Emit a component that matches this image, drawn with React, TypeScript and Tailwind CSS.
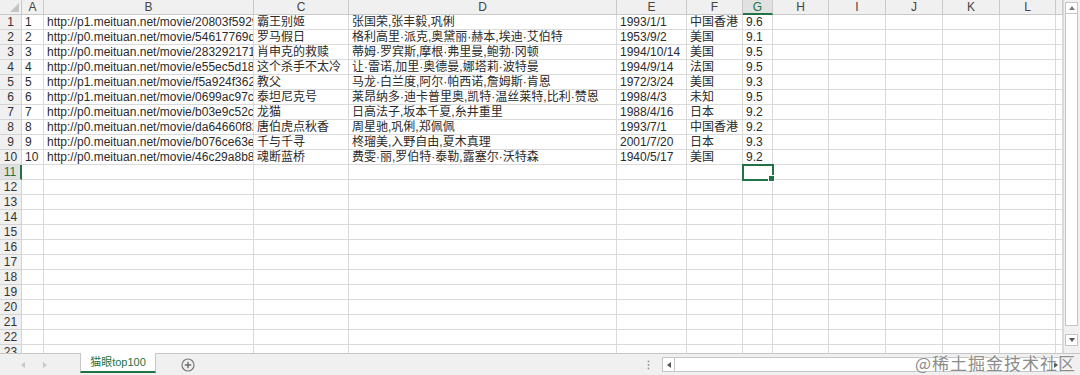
import React from 'react';

const font = { fontFamily: '"Liberation Sans", "Noto Sans CJK SC", sans-serif' };

const columns = [
  { key: 'A', w: 'w-[22px]' },
  { key: 'B', w: 'w-[210px]' },
  { key: 'C', w: 'w-[95px]' },
  { key: 'D', w: 'w-[268px]' },
  { key: 'E', w: 'w-[70px]' },
  { key: 'F', w: 'w-[56px]' },
  { key: 'G', w: 'w-[30px]' },
  { key: 'H', w: 'w-[56px]' },
  { key: 'I', w: 'w-[57px]' },
  { key: 'J', w: 'w-[57px]' },
  { key: 'K', w: 'w-[57px]' },
  { key: 'L', w: 'w-[56px]' },
  { key: 'M', w: 'flex-1 min-w-0' },
];

const movies = [
  ['1', 'http://p1.meituan.net/movie/20803f59291c47e1e116c11963ce019e68711.jpg', '霸王别姬', '张国荣,张丰毅,巩俐', '1993/1/1', '中国香港', '9.6'],
  ['2', 'http://p0.meituan.net/movie/54617769d96807e4d81804284ffe2a27239007.jpg', '罗马假日', '格利高里·派克,奥黛丽·赫本,埃迪·艾伯特', '1953/9/2', '美国', '9.1'],
  ['3', 'http://p0.meituan.net/movie/283292171619cdfd5b240c8fd093f1eb255670.jpg', '肖申克的救赎', '蒂姆·罗宾斯,摩根·弗里曼,鲍勃·冈顿', '1994/10/14', '美国', '9.5'],
  ['4', 'http://p0.meituan.net/movie/e55ec5d18ccc83ba7db68caae54f165f95924.jpg', '这个杀手不太冷', '让·雷诺,加里·奥德曼,娜塔莉·波特曼', '1994/9/14', '法国', '9.5'],
  ['5', 'http://p1.meituan.net/movie/f5a924f362f050881f2b8f82e852747c118515.jpg', '教父', '马龙·白兰度,阿尔·帕西诺,詹姆斯·肯恩', '1972/3/24', '美国', '9.3'],
  ['6', 'http://p1.meituan.net/movie/0699ac97c82cf01638aa5023562d6134351277.jpg', '泰坦尼克号', '莱昂纳多·迪卡普里奥,凯特·温丝莱特,比利·赞恩', '1998/4/3', '未知', '9.5'],
  ['7', 'http://p0.meituan.net/movie/b03e9c52c7c8b5fc1d7a0d1f8c3d3c0d4c8e.jpg', '龙猫', '日高法子,坂本千夏,糸井重里', '1988/4/16', '日本', '9.2'],
  ['8', 'http://p0.meituan.net/movie/da64660f82b98cdc1b8a3804e69609e041108.jpg', '唐伯虎点秋香', '周星驰,巩俐,郑佩佩', '1993/7/1', '中国香港', '9.2'],
  ['9', 'http://p0.meituan.net/movie/b076ce63e9860ecf1ee9839badee5228329384.jpg', '千与千寻', '柊瑠美,入野自由,夏木真理', '2001/7/20', '日本', '9.3'],
  ['10', 'http://p0.meituan.net/movie/46c29a8b8d8424bdda7715e6fd779c66235684.jpg', '魂断蓝桥', '费雯·丽,罗伯特·泰勒,露塞尔·沃特森', '1940/5/17', '美国', '9.2'],
];

const ROW_COUNT = 23;

function HeaderRow() {
  return (
    <div className="flex h-[15px] shrink-0">
      {/* corner */}
      <div className="relative w-[22px] shrink-0 bg-[#f0f0f0] border-r border-b border-[#c9c9c9]">
        <svg className="absolute right-[2px] bottom-[2px]" width="9" height="9" viewBox="0 0 9 9">
          <polygon points="9,0 9,9 0,9" fill="#c4c4c4" />
        </svg>
      </div>
      {columns.map((c) =>
        c.key === 'G' ? (
          <div
            key={c.key}
            className={`${c.w} shrink-0 bg-[#e1e1e1] border-r border-[#c9c9c9] border-b-2 border-b-[#217346] text-center text-[12px] leading-[14px] text-[#217346]`}
          >
            {c.key}
          </div>
        ) : (
          <div
            key={c.key}
            className={`${c.w} shrink-0 bg-[#f0f0f0] border-r border-b border-[#c9c9c9] text-center text-[12px] leading-[14px] text-[#444]`}
          >
            {c.key === 'M' ? '' : c.key}
          </div>
        )
      )}
    </div>
  );
}

function DataRow({ index }: { index: number }) {
  const data = movies[index - 1];
  const active = index === 11;
  return (
    <div className="flex h-[15px] shrink-0">
      {active ? (
        <div className="w-[22px] shrink-0 bg-[#e1e1e1] border-r-2 border-r-[#217346] border-b border-[#d4d4d4] text-center text-[12px] leading-[14px] text-[#217346]">
          {index}
        </div>
      ) : (
        <div className="w-[22px] shrink-0 bg-[#f0f0f0] border-r border-b border-[#d4d4d4] text-center text-[12px] leading-[14px] text-[#333]">
          {index}
        </div>
      )}
      {columns.map((c, ci) =>
        active && c.key === 'G' ? (
          <div key={c.key} className={`${c.w} relative shrink-0 border-r border-b border-[#dadada]`}>
            {/* selected cell */}
            <div className="absolute z-10 -left-px -top-px w-[32px] h-[17px] border-2 border-[#217346]" />
            <div className="absolute z-10 -right-[3px] -bottom-[3px] w-[7px] h-[7px] bg-[#217346] border border-white" />
          </div>
        ) : (
          <div
            key={c.key}
            className={`${c.w} shrink-0 border-r border-b border-[#dadada] overflow-hidden whitespace-nowrap pl-[3px] text-[12px] leading-[14px] text-[#2b2b2b]`}
          >
            {data && ci < data.length ? data[ci] : ''}
          </div>
        )
      )}
    </div>
  );
}

function Triangle({ dir, color = '#7a7a7a' }: { dir: 'up' | 'down' | 'left' | 'right'; color?: string }) {
  const pts = {
    up: '0,5 3,1 6,5',
    down: '0,1 3,5 6,1',
    left: '5,0 1,3 5,6',
    right: '1,0 5,3 1,6',
  }[dir];
  return (
    <svg width="6" height="6" viewBox="0 0 6 6">
      <polygon points={pts} fill={color} />
    </svg>
  );
}

function VerticalScrollbar() {
  return (
    <div className="w-[17px] shrink-0 flex flex-col bg-[#f0f0f0] border-l border-[#dadada] pl-[1px] pr-[2px] pt-[2px]">
      <div className="h-[12px] flex items-center justify-center bg-white border border-[#c6c6c6]">
        <Triangle dir="up" />
      </div>
      <div className="h-[312px] bg-white border-x border-b border-[#c6c6c6]" />
      <div className="flex-1" />
      <div className="h-[12px] mb-[7px] flex items-center justify-center bg-white border border-[#c6c6c6]">
        <Triangle dir="down" color="#555" />
      </div>
    </div>
  );
}

function SheetTabs() {
  return (
    <div className="h-[22px] shrink-0 flex bg-[#f0f0f0] border-t border-[#c6c6c6]">
      <div className="w-[80px] shrink-0 flex items-center">
        <div className="ml-[20px]">
          <Triangle dir="left" color="#c8c8c8" />
        </div>
        <div className="ml-[16px]">
          <Triangle dir="right" color="#c8c8c8" />
        </div>
      </div>
      <div className="w-[76px] h-[20px] -mt-px shrink-0 flex items-center justify-center bg-white border-x border-[#c6c6c6] border-b-2 border-b-[#217346] text-[11px] text-[#217346]">
        猫眼top100
      </div>
      <div className="w-[60px] shrink-0 flex items-center pl-[25px]">
        <svg width="14" height="14" viewBox="0 0 14 14">
          <circle cx="7" cy="7" r="6" fill="none" stroke="#7b7b7b" strokeWidth="1.2" />
          <path d="M7 3.8v6.4M3.8 7h6.4" stroke="#6b6b6b" strokeWidth="1.4" />
        </svg>
      </div>
      <div className="flex-1" />
      <div className="w-[17px] shrink-0 flex items-center pl-[2px]">
        <svg width="3" height="10" viewBox="0 0 3 10">
          <circle cx="1.5" cy="1.5" r="0.9" fill="#9a9a9a" />
          <circle cx="1.5" cy="5" r="0.9" fill="#9a9a9a" />
          <circle cx="1.5" cy="8.5" r="0.9" fill="#9a9a9a" />
        </svg>
      </div>
      <div className="w-[400px] shrink-0 flex items-center">
        <div className="w-full h-[15px] flex bg-white border border-[#c6c6c6]">
          <div className="w-[12px] flex items-center justify-center border-r border-[#c6c6c6]">
            <Triangle dir="left" color="#555" />
          </div>
          <div className="flex-1" />
          <div className="w-[12px] flex items-center justify-center border-l border-[#c6c6c6]">
            <Triangle dir="right" color="#555" />
          </div>
        </div>
      </div>
      <div className="w-[18px] shrink-0" />
    </div>
  );
}

export default function App() {
  const rows = Array.from({ length: ROW_COUNT }, (_, i) => i + 1);
  return (
    <div className="relative w-[1080px] h-[375px] overflow-hidden bg-white flex flex-col" style={font}>
      <div className="flex h-[353px] shrink-0 overflow-hidden">
        <div className="flex-1 min-w-0 flex flex-col overflow-hidden">
          <HeaderRow />
          {rows.map((r) => (
            <DataRow key={r} index={r} />
          ))}
        </div>
        <VerticalScrollbar />
      </div>
      <SheetTabs />

      {/* watermark */}
      <div
        className="absolute right-[4px] bottom-[1px] text-[17px] leading-[22px] text-[#8c8c8c] tracking-[1px]"
        style={{ fontFamily: '"Noto Sans CJK SC", sans-serif', textShadow: '0 0 2px #fff, 0 0 2px #fff' }}
      >
        @稀土掘金技术社区
      </div>
    </div>
  );
}
